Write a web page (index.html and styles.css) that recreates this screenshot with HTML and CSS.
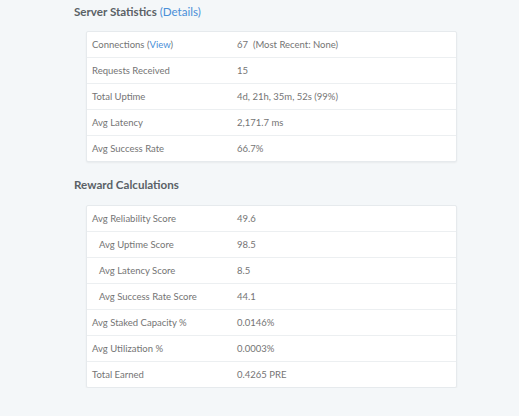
FILE: index.html
```html
<!DOCTYPE html>
<html>
<head>
    <meta charset="UTF-8">
    <title>Node Statistics</title>
    <link rel="stylesheet" href="styles.css">
</head>
<body>
    <div class="page">
        <h3 class="section-title">Server Statistics <span class="paren">(<a href="#">Details</a>)</span></h3>
        <div class="card">
            <div class="row"><div class="label">Connections (<a href="#">View</a>)</div><div class="value">67&nbsp; (Most Recent: None)</div></div>
            <div class="row"><div class="label">Requests Received</div><div class="value">15</div></div>
            <div class="row"><div class="label">Total Uptime</div><div class="value">4d, 21h, 35m, 52s (99%)</div></div>
            <div class="row"><div class="label">Avg Latency</div><div class="value">2,171.7 ms</div></div>
            <div class="row"><div class="label">Avg Success Rate</div><div class="value">66.7%</div></div>
        </div>

        <h3 class="section-title second">Reward Calculations</h3>
        <div class="card">
            <div class="row"><div class="label">Avg Reliability Score</div><div class="value">49.6</div></div>
            <div class="row"><div class="label sub">Avg Uptime Score</div><div class="value">98.5</div></div>
            <div class="row"><div class="label sub">Avg Latency Score</div><div class="value">8.5</div></div>
            <div class="row"><div class="label sub">Avg Success Rate Score</div><div class="value">44.1</div></div>
            <div class="row"><div class="label">Avg Staked Capacity %</div><div class="value">0.0146%</div></div>
            <div class="row"><div class="label">Avg Utilization %</div><div class="value">0.0003%</div></div>
            <div class="row"><div class="label">Total Earned</div><div class="value">0.4265 PRE</div></div>
        </div>
    </div>
</body>
</html>
```

FILE: styles.css
```css
body {
    margin: 0;
    background-color: #f4f7f9;
    font-family: Lato, "Open Sans", sans-serif;
}
a {
    color: #4a8fd8;
    text-decoration: none;
}
.page {
    padding: 0 0 0 74px;
}
.section-title {
    margin: 0 0 7px 0;
    height: 24px;
    line-height: 24px;
    font-size: 11.6px;
    font-weight: bold;
    color: #5a6166;
}
.section-title .paren {
    font-weight: normal;
    color: #4a8fd8;
}
.section-title.second {
    margin-top: 11px;
    margin-bottom: 8px;
}
.card {
    margin-left: 12px;
    width: 369px;
    background-color: #fff;
    border: 1px solid #e6eaed;
    border-radius: 2px;
    box-shadow: 0 1px 2px rgba(0, 0, 0, 0.05);
}
.row {
    display: flex;
    height: 25px;
    line-height: 25px;
    border-bottom: 1px solid #eceff1;
    font-size: 9.5px;
    color: #747474;
}
.row:last-child {
    border-bottom: none;
}
.label {
    width: 145px;
    padding-left: 5px;
}
.label.sub {
    width: 138px;
    padding-left: 12px;
}
.value {
    flex: 1;
}
```
